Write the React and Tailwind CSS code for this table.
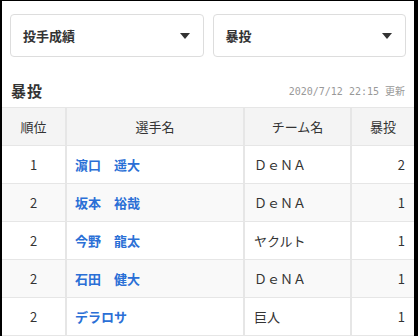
import React from "react";

const rows = [
  { rank: "1", name: "濵口　遥大", team: "ＤｅＮＡ", count: "2" },
  { rank: "2", name: "坂本　裕哉", team: "ＤｅＮＡ", count: "1" },
  { rank: "2", name: "今野　龍太", team: "ヤクルト", count: "1" },
  { rank: "2", name: "石田　健大", team: "ＤｅＮＡ", count: "1" },
  { rank: "2", name: "デラロサ", team: "巨人", count: "1" },
];

function Caret() {
  return (
    <svg width="10" height="6" viewBox="0 0 10 6" className="shrink-0">
      <path d="M0 0 H10 L5 6 Z" fill="#333" />
    </svg>
  );
}

function SelectBox({ label }) {
  return (
    <div className="flex-1 h-[43px] rounded-[4px] border border-[#dddddd] bg-white flex items-center justify-between pl-[12px] pr-[13px]">
      <span className="text-[13px] font-bold text-[#333]">{label}</span>
      <Caret />
    </div>
  );
}

export default function App() {
  return (
    <div
      className="w-[418px] h-[336px] overflow-hidden bg-black flex flex-col"
      style={{ fontFamily: '"Noto Sans CJK JP", "Noto Sans", sans-serif' }}
    >
      <div className="h-[1px] shrink-0" />
      <div className="flex-1 flex">
        <div className="w-[2px] shrink-0" />
        <div className="w-[412px] bg-white flex flex-col">
          <div className="flex gap-[9px] px-[8px] pt-[13px]">
            <SelectBox label="投手成績" />
            <SelectBox label="暴投" />
          </div>
          <div className="flex items-end justify-between pl-[9px] pr-[9px] mt-[22px] h-[22px]">
            <span className="text-[15px] font-bold text-[#333] tracking-[1px] leading-[20px]">暴投</span>
            <span
              className="text-[10px] text-[#999] leading-[16px] mb-[1px]"
              style={{ fontFamily: '"DejaVu Sans Mono", "Noto Sans CJK JP", monospace' }}
            >
              2020/7/12 22:15 更新
            </span>
          </div>
          <table className="mt-[6px] w-full border-collapse table-fixed text-[13px] text-[#333]">
            <colgroup>
              <col className="w-[64px]" />
              <col className="w-[178px]" />
              <col className="w-[107px]" />
              <col className="w-[63px]" />
            </colgroup>
            <thead>
              <tr className="h-[38px] bg-[#f4f4f4]">
                <th className="font-normal text-center border border-[#e6e6e6] border-l-0">順位</th>
                <th className="font-normal text-center border border-[#e6e6e6] border-l-2">選手名</th>
                <th className="font-normal text-center border border-[#e6e6e6] border-l-2">チーム名</th>
                <th className="font-normal text-center border border-[#e6e6e6] border-l-2 border-r-0">暴投</th>
              </tr>
            </thead>
            <tbody>
              {rows.map((r, i) => (
                <tr key={i} className={`h-[38px] ${i % 2 === 1 ? "bg-[#f9f9f9]" : "bg-white"}`}>
                  <td className="text-center border border-[#e6e6e6] border-l-0">{r.rank}</td>
                  <td className="pl-[8px] border border-[#e6e6e6] border-l-2 font-bold text-[#2a6fd6]">{r.name}</td>
                  <td className="pl-[9px] border border-[#e6e6e6] border-l-2">{r.team}</td>
                  <td className="text-right pr-[9px] border border-[#e6e6e6] border-l-2 border-r-0">{r.count}</td>
                </tr>
              ))}
            </tbody>
          </table>
        </div>
        <div className="flex-1" />
      </div>
    </div>
  );
}
